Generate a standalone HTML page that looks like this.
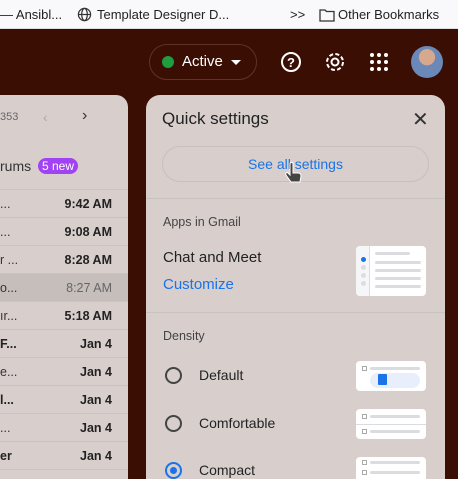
<!DOCTYPE html>
<html><head><style>
*{margin:0;padding:0;box-sizing:border-box}
html,body{width:458px;height:479px;overflow:hidden}
body{background:#3a0e03;font-family:"Liberation Sans",sans-serif;position:relative}
.bm{position:absolute;top:0;left:0;width:458px;height:29px;background:#f9f9fb;border-bottom:1px solid #ddd;font-size:13px;color:#222}
.bm span{position:absolute;top:7px}
.lp{position:absolute;left:-20px;top:95px;width:148px;height:384px;background:#d8cfcd;border-radius:12px 12px 0 0;overflow:hidden}
.rp{position:absolute;left:146px;top:95px;width:299px;height:384px;background:#d8cfcd;border-radius:14px 14px 0 0;overflow:hidden}
.row{position:absolute;left:20px;width:128px;height:28px;border-top:1px solid #cbc3c1;font-size:12.5px;color:#222}
.row .a{position:absolute;left:0;top:7px;color:#333}
.row .t{position:absolute;right:16px;top:7px;font-weight:bold}
.abs{position:absolute}
.sep{position:absolute;left:0;width:299px;height:1px;background:#c9c2c0}
.radio{position:absolute;left:19px;width:17px;height:17px;border:2px solid #444;border-radius:50%}
.img{position:absolute;left:210px;width:70px;background:#fff;border-radius:4px}
.ln{position:absolute;height:3px;background:#dadce0;border-radius:2px}
.sq{position:absolute;width:5px;height:5px;border:1px solid #aaa}
</style></head><body>
<div class="bm">
<span style="left:0">— Ansibl...</span>
<svg class="abs" style="left:77px;top:7px" width="15" height="15" viewBox="0 0 16 16"><g fill="none" stroke="#333" stroke-width="1.3"><circle cx="8" cy="8" r="6.5"/><ellipse cx="8" cy="8" rx="3" ry="6.5"/><path d="M1.5 8h13"/></g></svg>
<span style="left:97px">Template Designer D...</span>
<span style="left:290px">&gt;&gt;</span>
<svg class="abs" style="left:319px;top:8px" width="16" height="14" viewBox="0 0 16 14"><path d="M1 2h5l1.5 1.5H15V13H1z" fill="none" stroke="#333" stroke-width="1.3"/></svg>
<span style="left:338px">Other Bookmarks</span>
</div>
<div class="abs" style="left:149px;top:44px;width:108px;height:36px;border:1px solid #5e3328;border-radius:18px"></div>
<div class="abs" style="left:162px;top:56px;width:12px;height:12px;border-radius:50%;background:#1e9e3e"></div>
<div class="abs" style="left:182px;top:53px;color:#fff;font-size:15px">Active</div>
<div class="abs" style="left:231px;top:60px;width:0;height:0;border-left:5px solid transparent;border-right:5px solid transparent;border-top:5px solid #fff"></div>
<svg class="abs" style="left:279px;top:50px" width="24" height="24" viewBox="0 0 24 24"><circle cx="12" cy="12" r="9" fill="none" stroke="#fff" stroke-width="2"/><text x="12" y="17" text-anchor="middle" fill="#fff" font-size="13" font-weight="bold" font-family="Liberation Sans">?</text></svg>
<svg class="abs" style="left:323px;top:50px" width="24" height="24" viewBox="0 0 24 24"><circle cx="12" cy="12" r="3.5" fill="none" stroke="#fff" stroke-width="2"/><circle cx="12" cy="12" r="8" fill="none" stroke="#fff" stroke-width="2" stroke-dasharray="4 2.3"/></svg>
<svg class="abs" style="left:369px;top:52px" width="20" height="20"><g fill="#fff"><circle cx="3" cy="3" r="2"/><circle cx="10" cy="3" r="2"/><circle cx="17" cy="3" r="2"/><circle cx="3" cy="10" r="2"/><circle cx="10" cy="10" r="2"/><circle cx="17" cy="10" r="2"/><circle cx="3" cy="17" r="2"/><circle cx="10" cy="17" r="2"/><circle cx="17" cy="17" r="2"/></g></svg>
<div class="abs" style="left:411px;top:46px;width:32px;height:32px;border-radius:50%;background:radial-gradient(circle at 50% 35%,#d6a88e 0 30%,#6a88b8 32%)"></div>

<div class="lp">
<div class="abs" style="left:20px;top:16px;font-size:11px;color:#666">353</div>
<div class="abs" style="left:63px;top:14px;font-size:14px;color:#aaa">‹</div>
<div class="abs" style="left:102px;top:12px;font-size:16px;color:#333">›</div>
<div class="abs" style="left:20px;top:63px;font-size:14px;color:#333">rums</div>
<div class="abs" style="left:58px;top:63px;background:#a142f4;color:#fff;font-size:12px;padding:1px 4px;border-radius:8px">5 new</div>
<div class="row" style="top:94px"><span class="a">...</span><span class="t">9:42 AM</span></div>
<div class="row" style="top:122px"><span class="a">...</span><span class="t">9:08 AM</span></div>
<div class="row" style="top:150px"><span class="a">r ...</span><span class="t">8:28 AM</span></div>
<div class="row" style="top:178px;background:#c6bebb"><span class="a">o...</span><span class="t" style="font-weight:normal;color:#666">8:27 AM</span></div>
<div class="row" style="top:206px"><span class="a">ır...</span><span class="t">5:18 AM</span></div>
<div class="row" style="top:234px"><span class="a" style="font-weight:bold;color:#222">F...</span><span class="t">Jan 4</span></div>
<div class="row" style="top:262px"><span class="a">e...</span><span class="t">Jan 4</span></div>
<div class="row" style="top:290px"><span class="a" style="font-weight:bold;color:#222">l...</span><span class="t">Jan 4</span></div>
<div class="row" style="top:318px"><span class="a">...</span><span class="t">Jan 4</span></div>
<div class="row" style="top:346px"><span class="a" style="font-weight:bold;color:#222">er</span><span class="t">Jan 4</span></div>
<div class="row" style="top:374px;height:10px"></div>
</div>

<div class="rp">
<div class="abs" style="left:16px;top:14px;font-size:17px;color:#222">Quick settings</div>
<div class="abs" style="left:266px;top:12px;font-size:20px;color:#333">✕</div>
<div class="abs" style="left:16px;top:51px;width:267px;height:36px;border:1px solid #c8c0be;border-radius:18px;text-align:center;line-height:34px;color:#1a73e8;font-size:14px">See all settings</div>
<div class="sep" style="top:103px"></div>
<div class="abs" style="left:17px;top:120px;font-size:12.5px;color:#444">Apps in Gmail</div>
<div class="abs" style="left:17px;top:154px;font-size:15px;color:#222">Chat and Meet</div>
<div class="abs" style="left:17px;top:181px;font-size:15px;color:#1a73e8">Customize</div>
<div class="img" style="top:151px;height:50px">
<div class="abs" style="left:0;top:0;width:14px;height:50px;background:#f5f6f8;border-right:1px solid #dadce0;border-radius:4px 0 0 4px"></div>
<div class="abs" style="left:5px;top:11px;width:5px;height:5px;border-radius:50%;background:#1a73e8"></div>
<div class="abs" style="left:5px;top:19px;width:5px;height:5px;border-radius:50%;background:#ddd"></div>
<div class="abs" style="left:5px;top:27px;width:5px;height:5px;border-radius:50%;background:#ddd"></div>
<div class="abs" style="left:5px;top:35px;width:5px;height:5px;border-radius:50%;background:#ddd"></div>
<div class="ln" style="left:19px;top:6px;width:35px"></div>
<div class="ln" style="left:19px;top:15px;width:46px"></div>
<div class="ln" style="left:19px;top:23px;width:46px"></div>
<div class="ln" style="left:19px;top:31px;width:46px"></div>
<div class="ln" style="left:19px;top:39px;width:46px"></div>
</div>
<div class="sep" style="top:217px"></div>
<div class="abs" style="left:17px;top:234px;font-size:12.5px;color:#444">Density</div>
<div class="radio" style="top:272px"></div>
<div class="abs" style="left:53px;top:272px;font-size:14px;color:#222">Default</div>
<div class="img" style="top:266px;height:30px">
<div class="sq" style="left:6px;top:5px"></div><div class="ln" style="left:14px;top:6px;width:50px"></div>
<div class="abs" style="left:14px;top:12px;width:50px;height:15px;border-radius:8px;background:#e8eefb"></div>
<div class="abs" style="left:22px;top:13px;width:9px;height:11px;background:#1a73e8;border-radius:1px"></div>
</div>
<div class="radio" style="top:320px"></div>
<div class="abs" style="left:53px;top:320px;font-size:14px;color:#222">Comfortable</div>
<div class="img" style="top:314px;height:30px">
<div class="sq" style="left:6px;top:5px"></div><div class="ln" style="left:14px;top:6px;width:50px"></div>
<div class="abs" style="left:0;top:15px;width:70px;height:1px;background:#dadce0"></div>
<div class="sq" style="left:6px;top:20px"></div><div class="ln" style="left:14px;top:21px;width:50px"></div>
</div>
<div class="radio" style="top:367px;border-color:#1a73e8"><div class="abs" style="left:3px;top:3px;width:7px;height:7px;border-radius:50%;background:#1a73e8"></div></div>
<div class="abs" style="left:53px;top:367px;font-size:14px;color:#222">Compact</div>
<div class="img" style="top:362px;height:22px;border-radius:4px 4px 0 0">
<div class="sq" style="left:6px;top:3px"></div><div class="ln" style="left:14px;top:4px;width:50px"></div>
<div class="sq" style="left:6px;top:13px"></div><div class="ln" style="left:14px;top:14px;width:50px"></div>
</div>
</div>
<svg class="abs" style="left:285px;top:162px" width="18" height="24" viewBox="0 0 18 24"><path d="M5 2v11l-2-2c-1-1-3 0-2 2l5 7h9l1-6c0-2-1-3-3-3h-5V2C8 0 5 0 5 2z" fill="#444" stroke="#fff" stroke-width="1"/></svg>
</body></html>
